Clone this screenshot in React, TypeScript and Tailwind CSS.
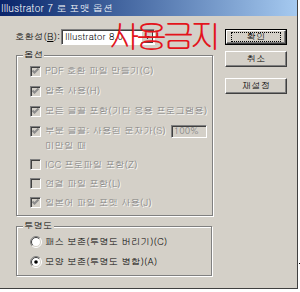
import type { ReactNode } from 'react';

const FONT = "font-['Gulim','Noto_Sans_CJK_KR','Noto_Sans',sans-serif]";

function CheckBox({ checked }: { checked: boolean }) {
  return (
    <span className="flex h-[11px] w-[11px] shrink-0 items-center justify-center border border-t-[#808080] border-l-[#808080] border-r-white border-b-white bg-[#d4d0c8] shadow-[inset_1px_1px_0_#404040,inset_-1px_-1px_0_#d4d0c8]">
      {checked && (
        <svg width="7" height="7" viewBox="0 0 7 7">
          <path d="M0.5 2.5 L2.5 4.5 L6.5 0.5" stroke="#8c8c8c" strokeWidth="2" fill="none" />
        </svg>
      )}
    </span>
  );
}

function Radio({ on }: { on: boolean }) {
  return (
    <svg width="12" height="12" viewBox="0 0 12 12" className="shrink-0">
      <circle cx="6" cy="6" r="5" fill="white" />
      <path d="M2.1 9.9 A5.5 5.5 0 0 1 9.9 2.1" stroke="#808080" fill="none" />
      <path d="M9.9 2.1 A5.5 5.5 0 0 1 2.1 9.9" stroke="white" fill="none" />
      <path d="M2.8 9.2 A4.5 4.5 0 0 1 9.2 2.8" stroke="#404040" fill="none" />
      <path d="M9.2 2.8 A4.5 4.5 0 0 1 2.8 9.2" stroke="#d4d0c8" fill="none" />
      {on && <circle cx="6" cy="6" r="1.8" fill="black" />}
    </svg>
  );
}

function Option({ checked, children, h = 'h-[20px]' }: { checked: boolean; children: ReactNode; h?: string }) {
  return (
    <div className={`flex items-center gap-[4px] ${h}`}>
      <CheckBox checked={checked} />
      <span className="text-[#808080] [text-shadow:1px_1px_0_#fff] whitespace-nowrap">{children}</span>
    </div>
  );
}

function Button({ label, isDefault }: { label: string; isDefault?: boolean }) {
  if (isDefault) {
    return (
      <div className="h-[16px] w-[62px] border border-black">
        <div className="flex h-full w-full items-center justify-center border border-t-white border-l-white border-r-[#404040] border-b-[#404040] shadow-[inset_-1px_-1px_0_#808080]">
          <span className="flex h-[10px] w-[50px] items-center justify-center border border-dotted border-black text-black">{label}</span>
        </div>
      </div>
    );
  }
  return (
    <div className="flex h-[16px] w-[62px] items-center justify-center border border-t-white border-l-white border-r-[#404040] border-b-[#404040] text-black shadow-[inset_-1px_-1px_0_#808080]">
      {label}
    </div>
  );
}

export default function App() {
  return (
    <div className={`relative h-[292px] w-[300px] bg-white text-[9.5px] leading-none ${FONT}`}>
      <div className="relative flex h-[289px] w-[298px] flex-col border-r border-b border-[#404040] bg-[#d4d0c8]">
        {/* title bar */}
        <div className="h-[16px] bg-gradient-to-r from-[#0a246a] to-[#a6caf0] pl-[1px] text-[10px] leading-[16px] text-white">
          Illustrator 7 로 포맷 옵션
        </div>

        <div className="flex">
          {/* left column */}
          <div className="w-[214px] pl-[15px]">
            <div className="mt-[13px] flex h-[16px] items-center">
              <span className="w-[46px] text-black">
                호환성(<span className="underline">B</span>):
              </span>
              <div className="flex h-[16px] w-[94px] items-center border border-t-[#808080] border-l-[#808080] border-r-white border-b-white bg-white shadow-[inset_1px_1px_0_#404040]">
                <span className="flex-1 pl-[3px] text-black">Illustrator 8.0</span>
                <span className="mr-[1px] flex h-[12px] w-[12px] items-center justify-center border border-t-white border-l-white border-r-[#404040] border-b-[#404040] bg-[#d4d0c8]">
                  <svg width="5" height="3" viewBox="0 0 5 3">
                    <path d="M0 0 H5 L2.5 3 Z" fill="black" />
                  </svg>
                </span>
              </div>
            </div>

            {/* options group */}
            <div className="relative ml-[1px] mt-[10px] h-[161px] w-[197px] border border-[#808080] pl-[13px] pt-[5px] shadow-[inset_1px_1px_0_#fff,1px_1px_0_#fff]">
              <span className="absolute -top-[6px] left-[6px] bg-[#d4d0c8] px-[1px] text-black">옵션</span>
              <Option checked>PDF 호환 파일 만들기(C)</Option>
              <Option checked>압축 사용(H)</Option>
              <Option checked>모든 글꼴 포함(기타 응용 프로그램용)</Option>
              <div className="flex h-[20px] items-center gap-[4px]">
                <CheckBox checked />
                <span className="text-[#808080] [text-shadow:1px_1px_0_#fff] whitespace-nowrap">부분 글꼴: 사용된 문자가(S)</span>
                <span className="ml-[1px] flex h-[13px] w-[36px] items-center border border-t-[#808080] border-l-[#808080] border-r-white border-b-white pl-[2px] text-[#808080] shadow-[inset_1px_1px_0_#404040]">
                  100%
                </span>
              </div>
              <div className="flex h-[14px] items-start pl-[15px] text-[#808080] [text-shadow:1px_1px_0_#fff]">미만일 때</div>
              <Option checked={false} h="h-[19px]">ICC 프로파일 포함(Z)</Option>
              <Option checked={false} h="h-[19px]">연결 파일 포함(L)</Option>
              <Option checked h="h-[19px]">일본어 파일 포맷 사용(J)</Option>
            </div>

            {/* transparency group */}
            <div className="relative ml-[1px] mt-[10px] h-[50px] w-[196px] border border-[#808080] pl-[13px] pt-[5px] shadow-[inset_1px_1px_0_#fff,1px_1px_0_#fff]">
              <span className="absolute -top-[6px] left-[6px] bg-[#d4d0c8] px-[1px] text-black">투명도</span>
              <div className="flex h-[20px] items-center gap-[3px] text-black">
                <Radio on={false} />
                <span className="whitespace-nowrap">패스 보존(투명도 버리기)(C)</span>
              </div>
              <div className="flex h-[20px] items-center gap-[3px] text-black">
                <Radio on />
                <span className="whitespace-nowrap">모양 보존(투명도 병합)(A)</span>
              </div>
            </div>
          </div>

          {/* buttons */}
          <div className="flex flex-col pl-[11px] pt-[13px]">
            <Button label="확인" isDefault />
            <div className="mt-[6px]">
              <Button label="취소" />
            </div>
            <div className="mt-[11px]">
              <Button label="재설정" />
            </div>
          </div>
        </div>

        {/* watermark */}
        <span className="pointer-events-none absolute left-[108px] top-[18px] text-[33px] font-light leading-none tracking-[-6px] text-[#e3141c]">
          사용금지
        </span>
      </div>
      <span className="absolute left-[299px] top-[263px] h-[1px] w-[1px] bg-black" />
    </div>
  );
}
